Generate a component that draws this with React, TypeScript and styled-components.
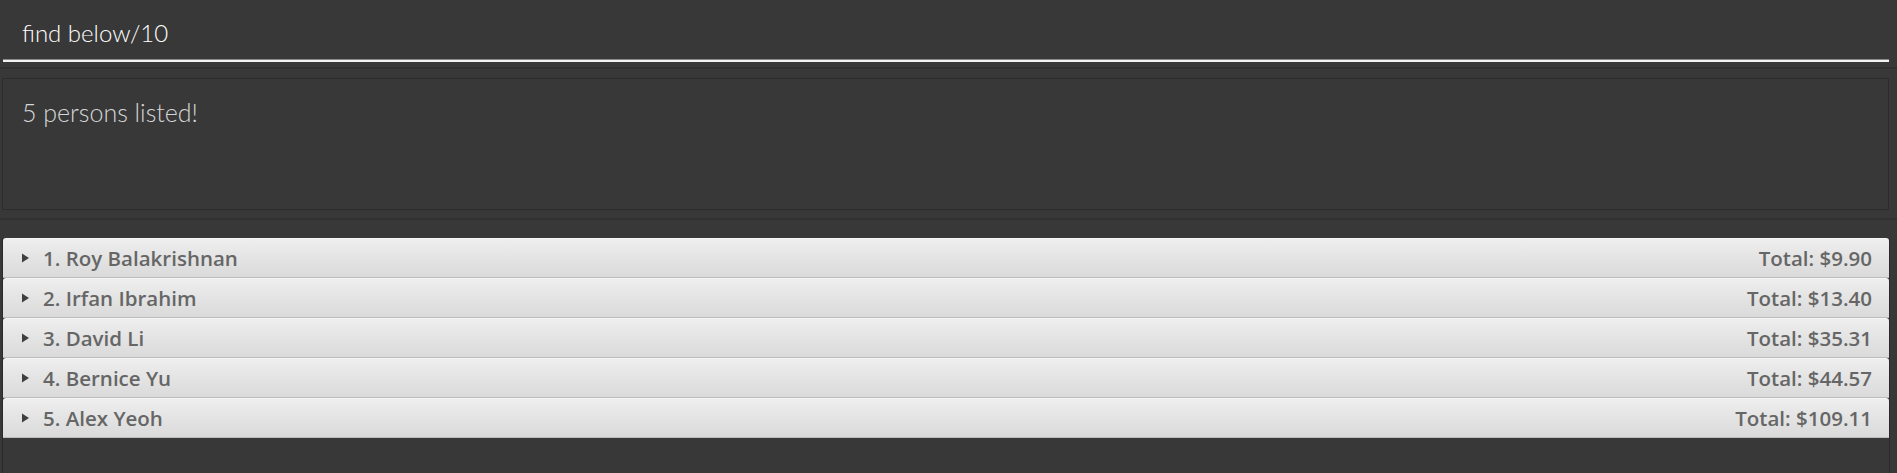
import React from 'react'
import styled, { createGlobalStyle } from 'styled-components'

const GlobalStyle = createGlobalStyle`
  html, body {
    margin: 0;
    padding: 0;
    background: #383838;
  }
  #root {
    height: 473px;
  }
`

const Window = styled.div`
  width: 1897px;
  height: 473px;
  background: #383838;
  display: flex;
  flex-direction: column;
  overflow: hidden;
`

const CommandSection = styled.div`
  height: 69px;
  padding: 0 8px 0 3px;
  border-bottom: 2px solid #303030;
  box-sizing: border-box;
  flex-shrink: 0;
`

const CommandField = styled.div`
  height: 62px;
  box-sizing: border-box;
  padding: 18px 0 0 19px;
  border-bottom: 2px solid #f2f2f2;
  box-shadow: 0 -1px 0 #8a8a8a inset;
  font-family: Lato, 'Open Sans', sans-serif;
  font-weight: 300;
  font-size: 24px;
  color: #ffffff;
`

const ResultSection = styled.div`
  padding: 9px 8px 8px 2px;
  border-bottom: 2px solid #303030;
  flex-shrink: 0;
`

const ResultBox = styled.div`
  height: 132px;
  box-sizing: border-box;
  border: 1px solid #2c2c2c;
  padding: 18px 0 0 19px;
  font-family: Lato, 'Open Sans', sans-serif;
  font-weight: 300;
  font-size: 25px;
  color: #d6d6d6;
`

const ListSection = styled.div`
  flex: 1;
  padding: 18px 7px 0 2px;
  display: flex;
`

const ListPanel = styled.div`
  flex: 1;
  border-left: 1px solid #2a2a2a;
  border-right: 1px solid #2a2a2a;
  display: flex;
  flex-direction: column;
`

const Row = styled.div`
  height: 40px;
  box-sizing: border-box;
  display: flex;
  align-items: center;
  padding: 0 17px 0 17px;
  border-radius: 3px 3px 0 0;
  border-top: 1px solid #f6f6f6;
  border-bottom: 1px solid #bcbcbc;
  background: linear-gradient(to bottom, #eeeeee 0%, #e4e4e4 50%, #dadada 100%);
  font-family: 'Open Sans', Lato, sans-serif;
  font-weight: 600;
  font-size: 20.5px;
  color: #666666;
`

const Arrow = styled.svg`
  width: 9px;
  height: 12px;
  margin-right: 14px;
  flex-shrink: 0;
`

const Name = styled.span`
  flex: 1;
`

const Total = styled.span``

const persons = [
  { name: 'Roy Balakrishnan', total: '9.90' },
  { name: 'Irfan Ibrahim', total: '13.40' },
  { name: 'David Li', total: '35.31' },
  { name: 'Bernice Yu', total: '44.57' },
  { name: 'Alex Yeoh', total: '109.11' },
]

const App = () => {
  return (
    <>
      <GlobalStyle />
      <Window>
        <CommandSection>
          <CommandField>find below/10</CommandField>
        </CommandSection>
        <ResultSection>
          <ResultBox>5 persons listed!</ResultBox>
        </ResultSection>
        <ListSection>
          <ListPanel>
            {persons.map((p, i) => (
              <Row key={p.name}>
                <Arrow viewBox="0 0 9 12">
                  <polygon points="2,1.5 9,6 2,10.5" fill="#3f3f3f" />
                </Arrow>
                <Name>{i + 1}. {p.name}</Name>
                <Total>Total: ${p.total}</Total>
              </Row>
            ))}
          </ListPanel>
        </ListSection>
      </Window>
    </>
  )
}

export default App
